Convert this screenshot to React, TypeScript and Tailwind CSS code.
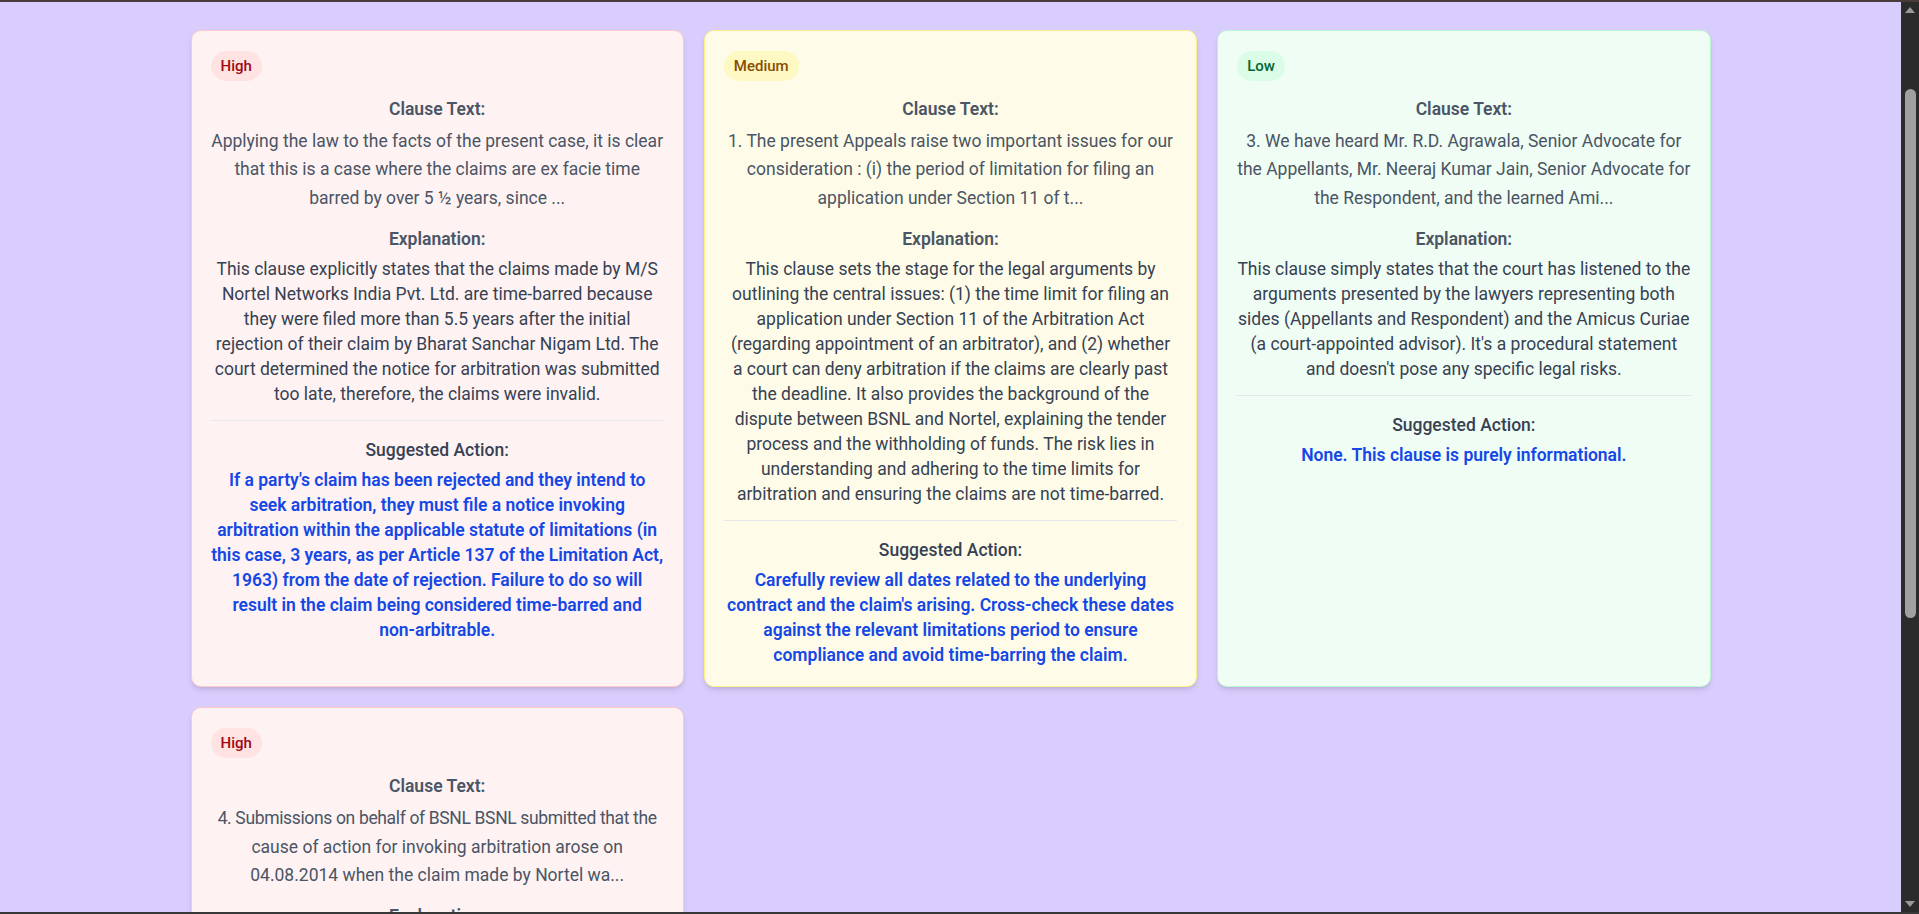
import React from "react";

type Level = "High" | "Medium" | "Low";

interface Clause {
  level: Level;
  clause: React.ReactNode;
  explanation: React.ReactNode;
  action: React.ReactNode;
}

const clauses: Clause[] = [
  {
    level: "High",
    clause:
      "Applying the law to the facts of the present case, it is clear that this is a case where the claims are ex facie time barred by over 5 ½ years, since ...",
    explanation:
      "This clause explicitly states that the claims made by M/S Nortel Networks India Pvt. Ltd. are time-barred because they were filed more than 5.5 years after the initial rejection of their claim by Bharat Sanchar Nigam Ltd. The court determined the notice for arbitration was submitted too late, therefore, the claims were invalid.",
    action: (
      <>
        If a party's claim has been rejected and they intend to seek arbitration, they must file a notice invoking
        arbitration within the applicable statute of limitations (in this case, 3 years, as per Article 137 of the
        Limitation Act, 1963) from the date of rejection. Failure to do so will result in the claim being considered
        time-barred and <span className="whitespace-nowrap">non-arbitrable.</span>
      </>
    ),
  },
  {
    level: "Medium",
    clause:
      "1. The present Appeals raise two important issues for our consideration : (i) the period of limitation for filing an application under Section 11 of t...",
    explanation: (
      <>
        This clause sets the stage for the legal arguments by outlining the central issues: (1) the time limit for
        filing an application under Section 11 of the Arbitration Act (regarding appointment of an arbitrator), and
        (2) whether <span className="whitespace-nowrap">a court</span> can deny arbitration if the claims are clearly
        past the deadline. It also provides the background of the dispute between BSNL and Nortel, explaining the
        tender process and the withholding of funds. The risk lies in understanding and adhering to the time limits
        for arbitration and ensuring the claims are not time-barred.
      </>
    ),
    action:
      "Carefully review all dates related to the underlying contract and the claim's arising. Cross-check these dates against the relevant limitations period to ensure compliance and avoid time-barring the claim.",
  },
  {
    level: "Low",
    clause:
      "3. We have heard Mr. R.D. Agrawala, Senior Advocate for the Appellants, Mr. Neeraj Kumar Jain, Senior Advocate for the Respondent, and the learned Ami...",
    explanation:
      "This clause simply states that the court has listened to the arguments presented by the lawyers representing both sides (Appellants and Respondent) and the Amicus Curiae (a court-appointed advisor). It's a procedural statement and doesn't pose any specific legal risks.",
    action: "None. This clause is purely informational.",
  },
  {
    level: "High",
    clause: (
      <>
        <span className="tracking-[-0.35px]">4. Submissions on behalf of BSNL BSNL submitted that the</span>{" "}
        cause of action for invoking arbitration arose on 04.08.2014 when the claim made by Nortel wa...
      </>
    ),
    explanation:
      "BSNL argues that the limitation period began when the claim was rejected on 04.08.2014, so the notice invoking arbitration issued years later falls well outside the permissible period.",
    action:
      "Record the exact date on which any claim is rejected and initiate arbitration proceedings well within the limitation period.",
  },
];

const cardStyles: Record<Level, { card: string; badge: string }> = {
  High: {
    card: "bg-red-50 border-red-200",
    badge: "bg-red-100 text-red-800",
  },
  Medium: {
    card: "bg-yellow-50 border-yellow-200",
    badge: "bg-yellow-100 text-yellow-800",
  },
  Low: {
    card: "bg-green-50 border-green-200",
    badge: "bg-green-100 text-green-800",
  },
};

function ClauseCard({ item }: { item: Clause }) {
  const s = cardStyles[item.level];
  return (
    <div className={`rounded-[10px] border px-[19px] pt-5 pb-[18px] shadow-md text-center ${s.card}`}>
      <div className="flex">
        <span className={`rounded-full px-[10px] py-[5px] text-[15px] leading-5 font-medium ${s.badge}`}>
          {item.level}
        </span>
      </div>
      <div className="mt-4">
        <h3 className="text-[17.5px] leading-[25px] font-semibold text-gray-600 mb-[5px]">Clause Text:</h3>
        <p className="text-[17.5px] leading-[28.4px] text-gray-600">{item.clause}</p>
      </div>
      <div className="mt-[15px]">
        <h3 className="text-[17.5px] leading-[25px] font-semibold text-gray-600 mb-[5px]">Explanation:</h3>
        <p className="text-[17.5px] leading-[25px] text-gray-700">{item.explanation}</p>
      </div>
      <div className="mt-[13px] border-t border-gray-200 pt-[17px]">
        <h3 className="text-[17.5px] leading-[25px] font-medium text-gray-700 mb-[5px]">Suggested Action:</h3>
        <p className="text-[17.5px] leading-[25px] font-semibold text-blue-700">{item.action}</p>
      </div>
    </div>
  );
}

function ScrollBar() {
  return (
    <div className="w-[18px] shrink-0 bg-[#2b2b2b] flex flex-col items-center">
      <svg width="10" height="6" viewBox="0 0 10 6" className="mt-[5px]">
        <path d="M5 0 L10 6 L0 6 Z" fill="#9a9a9a" />
      </svg>
      <div className="mt-[76px] h-[529px] w-[11px] rounded-full bg-[#a0a0a0]" />
      <div className="flex-1" />
      <svg width="10" height="6" viewBox="0 0 10 6" className="mb-[5px]">
        <path d="M0 0 L10 0 L5 6 Z" fill="#9a9a9a" />
      </svg>
    </div>
  );
}

export default function App() {
  return (
    <div className="h-screen flex flex-col border-t-2 border-b-2 border-t-[#4a3b3b] border-b-[#383838] font-['Roboto',sans-serif]">
      <div className="flex-1 min-h-0 flex">
        <main className="flex-1 min-w-0 overflow-hidden bg-[#d9cdfe]">
          <div className="w-[1520px] mx-auto pt-7 pb-10 grid grid-cols-3 gap-5">
            {clauses.map((c, i) => (
              <ClauseCard key={i} item={c} />
            ))}
          </div>
        </main>
        <ScrollBar />
      </div>
    </div>
  );
}
